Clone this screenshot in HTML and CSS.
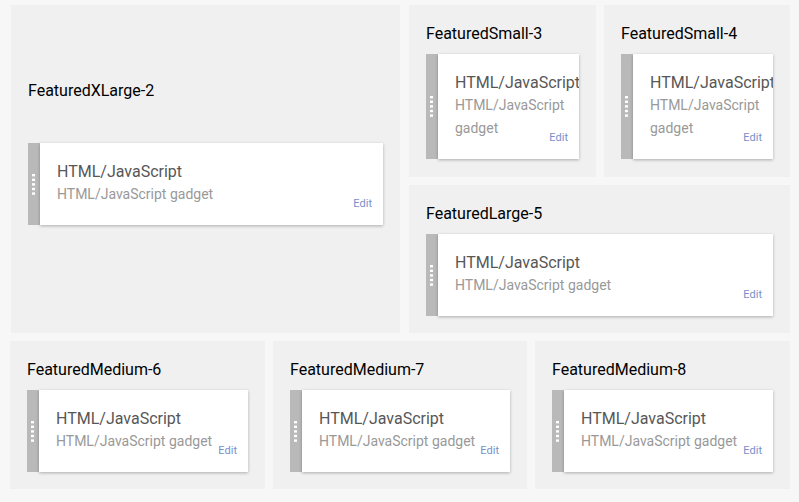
FILE: index.html
```html
<!DOCTYPE html>
<html>
<head>
<meta charset="utf-8">
<link rel="stylesheet" href="styles.css">
</head>
<body>
<div class="page">
  <div class="top">
    <section class="panel panel-xl">
      <h2 class="panel-title">FeaturedXLarge-2</h2>
      <div class="gadget">
        <div class="handle"><svg width="3" height="21" viewBox="0 0 3 21"><rect y="0" width="3" height="2.4" fill="#fff"/><rect y="4.6" width="3" height="2.4" fill="#fff"/><rect y="9.2" width="3" height="2.4" fill="#fff"/><rect y="13.8" width="3" height="2.4" fill="#fff"/><rect y="18.4" width="3" height="2.4" fill="#fff"/></svg></div>
        <div class="gadget-body">
          <div class="gadget-text">
            <div class="gadget-title">HTML/JavaScript</div>
            <div class="gadget-desc">HTML/JavaScript gadget</div>
          </div>
          <a class="gadget-edit">Edit</a>
        </div>
      </div>
    </section>
    <section class="panel">
      <h2 class="panel-title">FeaturedSmall-3</h2>
      <div class="gadget gadget-tall">
        <div class="handle"><svg width="3" height="21" viewBox="0 0 3 21"><rect y="0" width="3" height="2.4" fill="#fff"/><rect y="4.6" width="3" height="2.4" fill="#fff"/><rect y="9.2" width="3" height="2.4" fill="#fff"/><rect y="13.8" width="3" height="2.4" fill="#fff"/><rect y="18.4" width="3" height="2.4" fill="#fff"/></svg></div>
        <div class="gadget-body">
          <div class="gadget-text">
            <div class="gadget-title">HTML/JavaScript</div>
            <div class="gadget-desc">HTML/JavaScript gadget</div>
          </div>
          <a class="gadget-edit">Edit</a>
        </div>
      </div>
    </section>
    <section class="panel">
      <h2 class="panel-title">FeaturedSmall-4</h2>
      <div class="gadget gadget-tall">
        <div class="handle"><svg width="3" height="21" viewBox="0 0 3 21"><rect y="0" width="3" height="2.4" fill="#fff"/><rect y="4.6" width="3" height="2.4" fill="#fff"/><rect y="9.2" width="3" height="2.4" fill="#fff"/><rect y="13.8" width="3" height="2.4" fill="#fff"/><rect y="18.4" width="3" height="2.4" fill="#fff"/></svg></div>
        <div class="gadget-body">
          <div class="gadget-text">
            <div class="gadget-title">HTML/JavaScript</div>
            <div class="gadget-desc">HTML/JavaScript gadget</div>
          </div>
          <a class="gadget-edit">Edit</a>
        </div>
      </div>
    </section>
    <section class="panel panel-large">
      <h2 class="panel-title">FeaturedLarge-5</h2>
      <div class="gadget">
        <div class="handle"><svg width="3" height="21" viewBox="0 0 3 21"><rect y="0" width="3" height="2.4" fill="#fff"/><rect y="4.6" width="3" height="2.4" fill="#fff"/><rect y="9.2" width="3" height="2.4" fill="#fff"/><rect y="13.8" width="3" height="2.4" fill="#fff"/><rect y="18.4" width="3" height="2.4" fill="#fff"/></svg></div>
        <div class="gadget-body">
          <div class="gadget-text">
            <div class="gadget-title">HTML/JavaScript</div>
            <div class="gadget-desc">HTML/JavaScript gadget</div>
          </div>
          <a class="gadget-edit">Edit</a>
        </div>
      </div>
    </section>
  </div>
  <div class="bottom">
    <section class="panel">
      <h2 class="panel-title">FeaturedMedium-6</h2>
      <div class="gadget">
        <div class="handle"><svg width="3" height="21" viewBox="0 0 3 21"><rect y="0" width="3" height="2.4" fill="#fff"/><rect y="4.6" width="3" height="2.4" fill="#fff"/><rect y="9.2" width="3" height="2.4" fill="#fff"/><rect y="13.8" width="3" height="2.4" fill="#fff"/><rect y="18.4" width="3" height="2.4" fill="#fff"/></svg></div>
        <div class="gadget-body">
          <div class="gadget-text">
            <div class="gadget-title">HTML/JavaScript</div>
            <div class="gadget-desc">HTML/JavaScript gadget</div>
          </div>
          <a class="gadget-edit">Edit</a>
        </div>
      </div>
    </section>
    <section class="panel">
      <h2 class="panel-title">FeaturedMedium-7</h2>
      <div class="gadget">
        <div class="handle"><svg width="3" height="21" viewBox="0 0 3 21"><rect y="0" width="3" height="2.4" fill="#fff"/><rect y="4.6" width="3" height="2.4" fill="#fff"/><rect y="9.2" width="3" height="2.4" fill="#fff"/><rect y="13.8" width="3" height="2.4" fill="#fff"/><rect y="18.4" width="3" height="2.4" fill="#fff"/></svg></div>
        <div class="gadget-body">
          <div class="gadget-text">
            <div class="gadget-title">HTML/JavaScript</div>
            <div class="gadget-desc">HTML/JavaScript gadget</div>
          </div>
          <a class="gadget-edit">Edit</a>
        </div>
      </div>
    </section>
    <section class="panel">
      <h2 class="panel-title">FeaturedMedium-8</h2>
      <div class="gadget">
        <div class="handle"><svg width="3" height="21" viewBox="0 0 3 21"><rect y="0" width="3" height="2.4" fill="#fff"/><rect y="4.6" width="3" height="2.4" fill="#fff"/><rect y="9.2" width="3" height="2.4" fill="#fff"/><rect y="13.8" width="3" height="2.4" fill="#fff"/><rect y="18.4" width="3" height="2.4" fill="#fff"/></svg></div>
        <div class="gadget-body">
          <div class="gadget-text">
            <div class="gadget-title">HTML/JavaScript</div>
            <div class="gadget-desc">HTML/JavaScript gadget</div>
          </div>
          <a class="gadget-edit">Edit</a>
        </div>
      </div>
    </section>
  </div>
</div>
</body>
</html>
```

FILE: styles.css
```css
html, body {
  margin: 0;
  padding: 0;
}
body {
  background: #f7f7f7;
  font-family: Roboto, "Liberation Sans", Arial, sans-serif;
  width: 799px;
  height: 502px;
  overflow: hidden;
}
.page {
  display: flex;
  flex-direction: column;
  gap: 8px;
  padding-top: 5px;
}
.top {
  display: grid;
  grid-template-columns: 389px 187px 185px;
  grid-template-rows: 172px 148px;
  column-gap: 9px;
  row-gap: 8px;
  margin-left: 11px;
}
.top .panel:nth-child(3) {
  margin-left: -1px;
}
.panel-xl {
  grid-row: 1 / span 2;
}
.panel-large {
  grid-column: 2 / span 2;
}
.bottom {
  display: grid;
  grid-template-columns: 255px 254px 255px;
  grid-template-rows: 148px;
  column-gap: 8px;
  margin-left: 10px;
}
.panel {
  background: #f0f0f0;
  padding: 19px 17px 0 17px;
  box-sizing: border-box;
  min-width: 0;
}
.panel-xl {
  padding-top: 76px;
}
.panel-title {
  margin: 0 0 10px 0;
  font-size: 16px;
  line-height: 20px;
  font-weight: 400;
  color: #000;
  white-space: nowrap;
}
.panel-xl .panel-title {
  margin-bottom: 42px;
}
.gadget {
  display: flex;
}
.handle {
  flex: none;
  width: 12px;
  background: #b9b9b9;
  display: flex;
  align-items: center;
  justify-content: center;
}
.handle svg {
  display: block;
  margin-left: -1px;
}
.gadget-body {
  flex: 1;
  min-width: 0;
  background: #fff;
  box-shadow: 0 1px 3px rgba(0, 0, 0, 0.28);
  display: flex;
  align-items: flex-end;
  padding: 19px 11px 19px 17px;
  overflow: hidden;
}
.gadget-text {
  flex: 1;
  min-width: 0;
  align-self: flex-start;
}
.gadget-title {
  font-size: 16px;
  line-height: 20px;
  color: #575757;
  white-space: nowrap;
}
.gadget-desc {
  margin-top: 1px;
  font-size: 14px;
  line-height: 23px;
  color: #999;
}
.gadget-edit {
  flex: none;
  margin-left: 4px;
  margin-bottom: -5px;
  font-size: 11px;
  line-height: 14px;
  color: #7790cc;
}
```
